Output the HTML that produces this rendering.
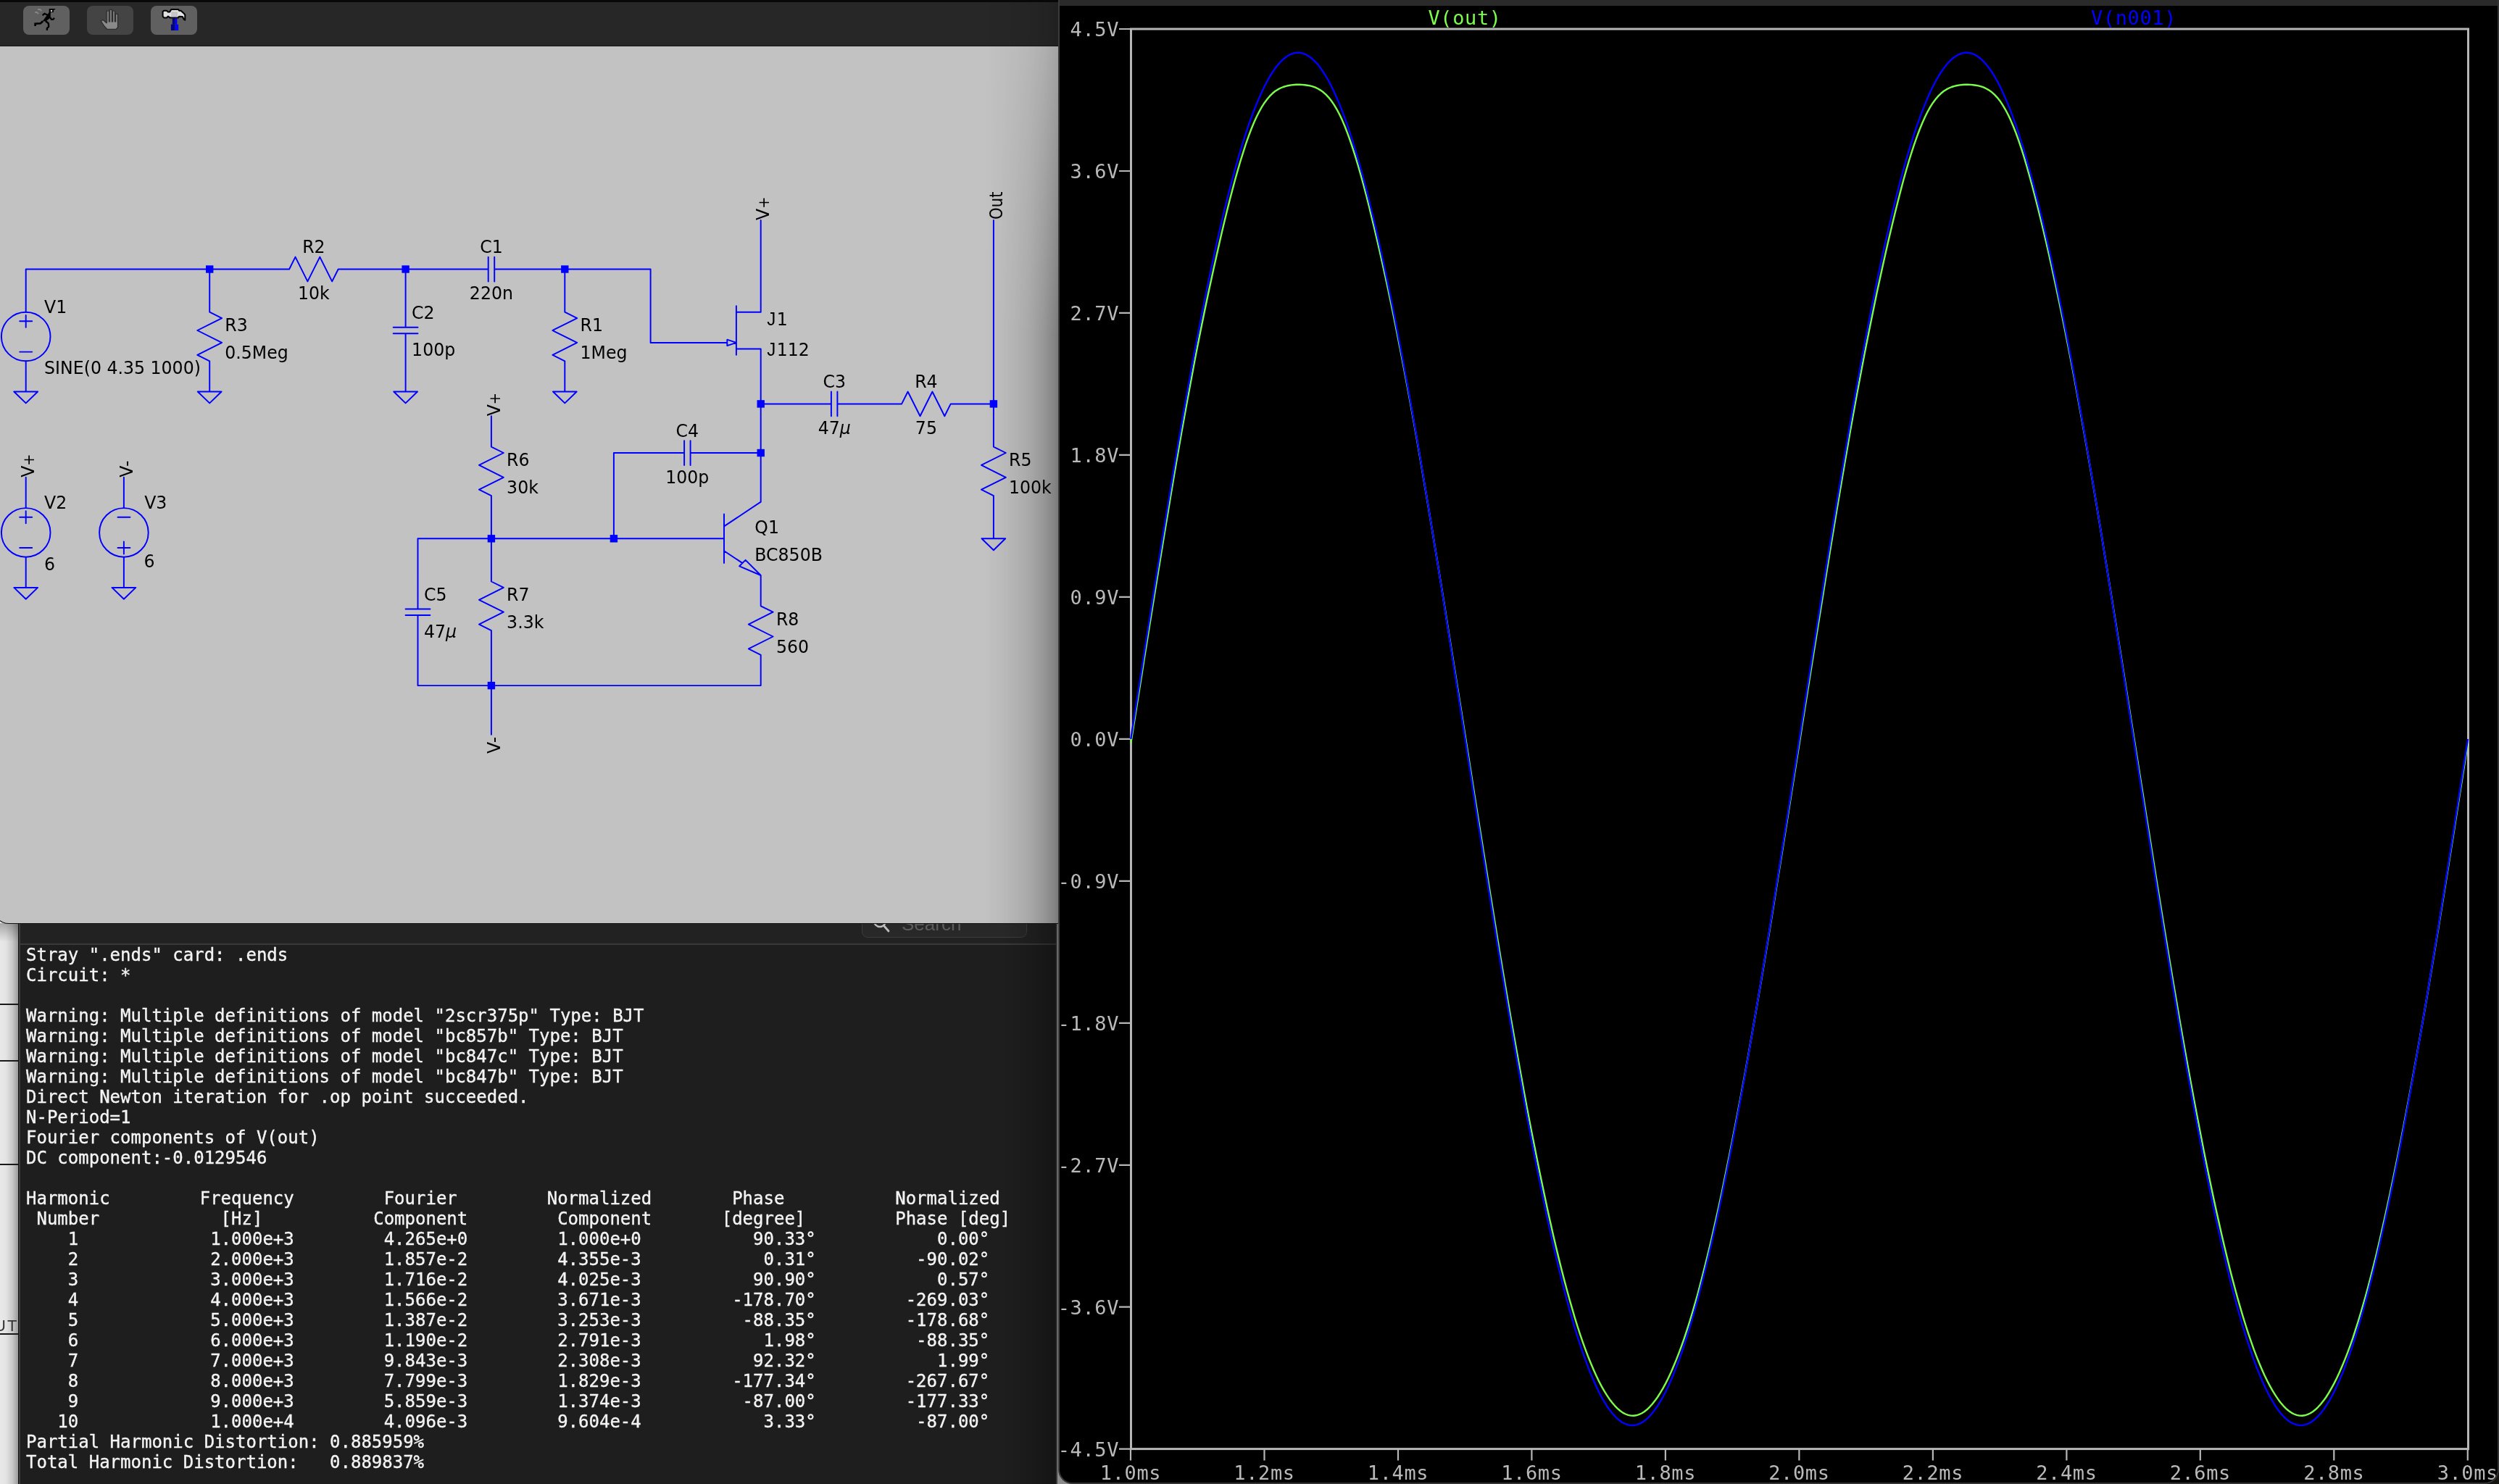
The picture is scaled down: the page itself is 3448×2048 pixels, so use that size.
<!DOCTYPE html>
<html><head><meta charset="utf-8"><title>LTspice</title>
<style>
html,body{margin:0;padding:0;width:3448px;height:2048px;background:#8c8c8c;}
#root{width:3448px;height:2048px;position:relative;overflow:hidden;background:#8c8c8c;}
#left{position:absolute;left:0;top:1260px;width:26px;height:788px;background:linear-gradient(90deg,#e9e9e9 0,#e4e4e4 8px,#c9c9c9 17px,#9c9c9c 25px);overflow:hidden;}
#left i{position:absolute;left:0;width:26px;height:2px;background:#1a1a1a;}
#left b{position:absolute;left:-8px;top:557px;font:normal 22px "Liberation Sans","DejaVu Sans",sans-serif;color:#333;letter-spacing:2px;will-change:transform;}
#left u{position:absolute;left:0;top:14px;width:26px;height:26px;background:linear-gradient(180deg,rgba(0,0,0,0.28),rgba(0,0,0,0));}
#con{position:absolute;left:25px;top:1262px;width:1434px;height:786px;background:#1e1e1e;box-sizing:border-box;border-left:1px solid #111;border-right:2px solid #3a3a3a;}
#con .rs{position:absolute;right:0;top:0;width:70px;height:100%;background:linear-gradient(90deg,rgba(0,0,0,0),rgba(0,0,0,0.12) 50%,rgba(0,0,0,0.3));}
#con .lb{position:absolute;left:0;top:0;width:2px;height:100%;background:#3e3e3e;}
#con .tb{position:absolute;left:2px;right:0;top:0;height:40px;background:#222222;border-bottom:2px solid #3a3a3a;}
#con .sr{will-change:transform;position:absolute;left:1161px;top:-6px;width:228px;height:38px;border:1.5px solid #3c3c3c;border-radius:8px;background:#282828;box-sizing:border-box;}
#con .sr span{position:absolute;left:54px;top:3px;font:26px "Liberation Sans","DejaVu Sans",sans-serif;color:#5c5c5c;}
#con .tx{position:absolute;left:10px;top:41.7px;will-change:transform;font:24px/28px "DejaVu Sans Mono","Liberation Mono",monospace;color:#f4f4f4;-webkit-text-stroke:0.35px #f4f4f4;}
.ln{height:28px;white-space:pre;}
.ln span{display:inline-block;}
.c0{width:239.7px}.c1{width:239.5px}.c2{width:239.5px}.c3{width:241px}.c4{width:239.5px}
#sch{position:absolute;left:-8px;top:0;width:1467.5px;height:1274px;background:#c2c2c2;border-radius:0 0 0 20px;overflow:hidden;box-shadow:0 0 0 1px #111;}
#sch .in{position:absolute;left:8px;top:0;width:1460px;height:1274px;}
#sch .top{position:absolute;left:0;top:0;width:1460px;height:3px;background:#080808;}
#sch .bar{position:absolute;left:0;top:3px;width:1460px;height:60px;background:#272727;border-bottom:1px solid #161616;}
#sch .sh{position:absolute;left:1360px;top:3px;width:100px;height:1271px;background:linear-gradient(90deg,rgba(0,0,0,0) 0,rgba(0,0,0,0.03) 20px,rgba(0,0,0,0.075) 40px,rgba(0,0,0,0.13) 60px,rgba(0,0,0,0.22) 80px,rgba(0,0,0,0.32) 95px,rgba(0,0,0,0.37) 100px);-webkit-mask-image:linear-gradient(180deg,rgba(0,0,0,0.4) 40px,#000 460px);mask-image:linear-gradient(180deg,rgba(0,0,0,0.4) 40px,#000 460px);}
#plt{position:absolute;left:1460px;top:0;width:1988px;height:2048px;background:#000;border-radius:0 0 20px 20px;overflow:hidden;box-sizing:border-box;border-left:2px solid #3a3a3a;border-right:2px solid #333;border-bottom:2px solid #333;}
#plt .tt{position:absolute;left:0;top:0;width:100%;height:8px;background:#2a2a2a;}
#plt .in{position:absolute;left:-2px;top:0;}
</style></head><body><div id="root">
<div style="position:absolute;left:3418px;top:2018px;width:30px;height:30px;background:#16150f"></div>
<div id="left"><i style="top:125px"></i><i style="top:203px"></i><i style="top:346px"></i><i style="top:580px"></i><b>UT</b><u></u></div>
<div id="con"><div class="lb"></div><div class="tb"><div class="sr"><svg width="40" height="40" viewBox="0 0 40 40" style="position:absolute;left:10px;top:2px"><circle cx="14" cy="12" r="8" fill="none" stroke="#bdbdbd" stroke-width="2.4"/><path d="M19.5 18.5L26 26" stroke="#bdbdbd" stroke-width="2.8" stroke-linecap="round"/></svg><span>Search</span></div></div>
<div class="tx">
<div class="ln">Stray &quot;.ends&quot; card: .ends</div>
<div class="ln">Circuit: *</div>
<div class="ln">&nbsp;</div>
<div class="ln">Warning: Multiple definitions of model &quot;2scr375p&quot; Type: BJT</div>
<div class="ln">Warning: Multiple definitions of model &quot;bc857b&quot; Type: BJT</div>
<div class="ln">Warning: Multiple definitions of model &quot;bc847c&quot; Type: BJT</div>
<div class="ln">Warning: Multiple definitions of model &quot;bc847b&quot; Type: BJT</div>
<div class="ln">Direct Newton iteration for .op point succeeded.</div>
<div class="ln">N-Period=1</div>
<div class="ln">Fourier components of V(out)</div>
<div class="ln">DC component:-0.0129546</div>
<div class="ln">&nbsp;</div>
<div class="ln"><span class="c0">Harmonic</span><span class="c1">Frequency</span><span class="c2"> Fourier </span><span class="c3">Normalized</span><span class="c4"> Phase  </span><span class="c5">Normalized</span></div>
<div class="ln"><span class="c0"> Number </span><span class="c1">  [Hz]   </span><span class="c2">Component</span><span class="c3"> Component</span><span class="c4">[degree]</span><span class="c5">Phase [deg]</span></div>
<div class="ln"><span class="c0">    1   </span><span class="c1"> 1.000e+3</span><span class="c2"> 4.265e+0</span><span class="c3"> 1.000e+0</span><span class="c4">   90.33°</span><span class="c5">    0.00°</span></div>
<div class="ln"><span class="c0">    2   </span><span class="c1"> 2.000e+3</span><span class="c2"> 1.857e-2</span><span class="c3"> 4.355e-3</span><span class="c4">    0.31°</span><span class="c5">  -90.02°</span></div>
<div class="ln"><span class="c0">    3   </span><span class="c1"> 3.000e+3</span><span class="c2"> 1.716e-2</span><span class="c3"> 4.025e-3</span><span class="c4">   90.90°</span><span class="c5">    0.57°</span></div>
<div class="ln"><span class="c0">    4   </span><span class="c1"> 4.000e+3</span><span class="c2"> 1.566e-2</span><span class="c3"> 3.671e-3</span><span class="c4"> -178.70°</span><span class="c5"> -269.03°</span></div>
<div class="ln"><span class="c0">    5   </span><span class="c1"> 5.000e+3</span><span class="c2"> 1.387e-2</span><span class="c3"> 3.253e-3</span><span class="c4">  -88.35°</span><span class="c5"> -178.68°</span></div>
<div class="ln"><span class="c0">    6   </span><span class="c1"> 6.000e+3</span><span class="c2"> 1.190e-2</span><span class="c3"> 2.791e-3</span><span class="c4">    1.98°</span><span class="c5">  -88.35°</span></div>
<div class="ln"><span class="c0">    7   </span><span class="c1"> 7.000e+3</span><span class="c2"> 9.843e-3</span><span class="c3"> 2.308e-3</span><span class="c4">   92.32°</span><span class="c5">    1.99°</span></div>
<div class="ln"><span class="c0">    8   </span><span class="c1"> 8.000e+3</span><span class="c2"> 7.799e-3</span><span class="c3"> 1.829e-3</span><span class="c4"> -177.34°</span><span class="c5"> -267.67°</span></div>
<div class="ln"><span class="c0">    9   </span><span class="c1"> 9.000e+3</span><span class="c2"> 5.859e-3</span><span class="c3"> 1.374e-3</span><span class="c4">  -87.00°</span><span class="c5"> -177.33°</span></div>
<div class="ln"><span class="c0">   10   </span><span class="c1"> 1.000e+4</span><span class="c2"> 4.096e-3</span><span class="c3"> 9.604e-4</span><span class="c4">    3.33°</span><span class="c5">  -87.00°</span></div>
<div class="ln">Partial Harmonic Distortion: 0.885959%</div>
<div class="ln">Total Harmonic Distortion:   0.889837%</div>
</div><div class="rs"></div></div>
<div id="sch"><div class="in"><div class="top"></div><div class="bar"></div>
<svg width="300" height="64" viewBox="0 0 300 64" style="position:absolute;left:0;top:0">
<rect x="32" y="8" width="64" height="40" rx="8" fill="#606060"/>
<rect x="120" y="8" width="64" height="40" rx="8" fill="#444444"/>
<rect x="208" y="8" width="64" height="40" rx="8" fill="#606060"/>
<polygon points="67.7,12.0 76.6,12.0 75.0,13.8 73.9,13.8 73.9,16.9 69.9,16.9 69.6,24.4 63.4,29.3 58.6,29.6 65.0,20.7 67.7,16.9" fill="#000"/>
<polyline points="59.1,29.3 55.9,32.3 48.6,32.7 48.6,36.0" fill="none" stroke="#000" stroke-width="2.6"/>
<polyline points="62.9,29.0 66.9,32.3 67.2,36.8 64.9,39.0 64.9,42.0" fill="none" stroke="#000" stroke-width="2.4"/>
<polyline points="65.6,20.7 61.5,18.8 58.6,21.2" fill="none" stroke="#000" stroke-width="2.2"/>
<polyline points="69.3,24.2 71.0,26.9 73.4,26.6 75.0,24.7" fill="none" stroke="#000" stroke-width="2.2"/>
<rect x="69.9" y="13.9" width="2.2" height="2.2" fill="#d0d0d0"/>
<polyline points="52.1,13.0 55.3,13.0 57.2,15.1" fill="none" stroke="#868686" stroke-width="1.8"/>
<polyline points="48.3,17.0 51.0,17.0 53.2,19.2" fill="none" stroke="#868686" stroke-width="1.8"/>
<polygon points="147.9,15.8 149.8,15.8 149.8,30.4 151.9,30.4 151.9,13.9 153.8,13.9 153.8,30.4 156.0,30.4 156.0,15.8 157.9,15.8 157.9,30.4 160.0,30.4 160.0,19.9 161.9,19.9 161.9,37.6 159.8,39.8 148.2,39.8 143.9,35.0 140.1,29.3 142.0,28.2 146.6,32.3 147.9,32.3" fill="#8a8a8a" stroke="#2e2e2e" stroke-width="2.6" stroke-linejoin="round"/>
<polygon points="147.9,15.8 149.8,15.8 149.8,30.4 151.9,30.4 151.9,13.9 153.8,13.9 153.8,30.4 156.0,30.4 156.0,15.8 157.9,15.8 157.9,30.4 160.0,30.4 160.0,19.9 161.9,19.9 161.9,37.6 159.8,39.8 148.2,39.8 143.9,35.0 140.1,29.3 142.0,28.2 146.6,32.3 147.9,32.3" fill="#8a8a8a"/>
<rect x="147.9" y="15.8" width="1.9" height="14.6" fill="#787878"/>
<rect x="151.9" y="13.9" width="1.9" height="16.4" fill="#787878"/>
<rect x="156.0" y="15.8" width="1.9" height="14.6" fill="#787878"/>
<rect x="160.0" y="19.9" width="1.9" height="10.5" fill="#787878"/>
<polygon points="224.6,16.1 226.2,14.7 230.0,14.7 231.9,16.6 234.0,16.6 236.4,12.9 245.9,12.9 247.2,14.7 249.6,14.7 253.7,18.5 255.3,20.4 255.3,27.7 253.7,26.6 251.8,23.1 247.0,22.8 245.9,24.4 234.6,24.4 231.9,22.6 230.0,24.4 226.2,24.4 224.6,22.6" fill="#e2e2e2" stroke="#000" stroke-width="2" stroke-linejoin="round"/>
<rect x="236.2" y="16.1" width="8.9" height="7.0" fill="#c6c6c6"/>
<rect x="237.8" y="25.3" width="3.8" height="8.4" fill="#000080"/>
<rect x="241.6" y="25.3" width="2.7" height="8.4" fill="#0000f0"/>
<rect x="235.9" y="33.6" width="5.7" height="8.4" fill="#000080"/>
<rect x="241.6" y="33.6" width="4.6" height="8.4" fill="#0000f8"/>
</svg>
<svg class="sch" width="1460" height="1211" viewBox="0 63 1460 1211" style="position:absolute;left:0;top:63px;will-change:transform">
<g fill="none" stroke="#0000ff" stroke-width="1.95" stroke-linecap="round" stroke-linejoin="round">
<path d="M27.2 443.3L44.2 443.3M27.2 485.6L44.2 485.6M35.7 434.9L35.7 451.8M35.7 506.7L35.7 498.3M35.7 422.2L35.7 430.7M559.6 460.2L559.6 489.8M559.6 451.8L559.6 422.2M542.7 451.8L576.5 451.8M542.7 460.2L576.5 460.2M673.7 371.5L644.1 371.5M682.2 371.5L711.7 371.5M682.2 354.6L682.2 388.4M673.7 354.6L673.7 388.4M1015.9 422.2L1015.9 489.8M999.0 472.9L1003.3 472.9M1146.9 557.4L1117.4 557.4M1155.4 557.4L1185.0 557.4M1155.4 540.5L1155.4 574.3M1146.9 540.5L1146.9 574.3M944.1 625.0L914.5 625.0M952.6 625.0L982.1 625.0M952.6 608.1L952.6 641.9M944.1 608.1L944.1 641.9M999.0 709.5L999.0 777.1M982.1 743.3L999.0 743.3M999.0 726.4L1049.7 692.6M999.0 760.2L1024.4 777.1M576.5 848.9L576.5 878.5M576.5 840.5L576.5 810.9M559.6 840.5L593.4 840.5M559.6 848.9L593.4 848.9M27.2 713.7L44.2 713.7M27.2 756.0L44.2 756.0M35.7 705.3L35.7 722.2M35.7 777.1L35.7 768.7M35.7 692.6L35.7 701.1M179.4 756.0L162.5 756.0M179.4 713.7L162.5 713.7M170.9 764.4L170.9 747.5M170.9 692.6L170.9 701.1M170.9 777.1L170.9 768.7M35.7 422.2L35.7 371.5L390.6 371.5M35.7 506.7L35.7 540.5M289.2 371.5L289.2 422.2M289.2 506.7L289.2 540.5M475.1 371.5L644.1 371.5M559.6 371.5L559.6 422.2M559.6 489.8L559.6 540.5M711.7 371.5L897.6 371.5L897.6 472.9L999.0 472.9M779.3 371.5L779.3 422.2M779.3 506.7L779.3 540.5M1049.7 405.3L1049.7 303.9M1049.7 506.7L1049.7 692.6M1049.7 557.4L1117.4 557.4M1185.0 557.4L1235.7 557.4M1320.2 557.4L1370.9 557.4M1370.9 303.9L1370.9 608.1M1370.9 692.6L1370.9 743.3M1049.7 625.0L982.1 625.0M914.5 625.0L846.9 625.0L846.9 743.3M576.5 810.9L576.5 743.3L982.1 743.3M677.9 574.3L677.9 608.1M677.9 692.6L677.9 794.0M677.9 878.5L677.9 1013.7M576.5 878.5L576.5 946.1L1049.7 946.1L1049.7 912.3M1049.7 827.8L1049.7 794.0M35.7 658.8L35.7 692.6M35.7 777.1L35.7 810.9M170.9 658.8L170.9 692.6M170.9 777.1L170.9 810.9M289.2 422.2L289.2 430.7L306.1 439.1L272.3 456.0L306.1 472.9L272.3 489.8L289.2 498.3L289.2 506.7M475.1 371.5L466.7 371.5L458.2 388.4L441.3 354.6L424.4 388.4L407.5 354.6L399.1 371.5L390.6 371.5M779.3 422.2L779.3 430.7L796.2 439.1L762.4 456.0L796.2 472.9L762.4 489.8L779.3 498.3L779.3 506.7M1049.7 405.3L1049.7 430.7L1015.9 430.7M1015.9 481.4L1049.7 481.4L1049.7 506.7M1320.2 557.4L1311.7 557.4L1303.3 574.3L1286.4 540.5L1269.5 574.3L1252.6 540.5L1244.1 557.4L1235.7 557.4M1370.9 608.1L1370.9 616.6L1387.8 625.0L1354.0 641.9L1387.8 658.8L1354.0 675.7L1370.9 684.2L1370.9 692.6M677.9 608.1L677.9 616.6L694.8 625.0L661.0 641.9L694.8 658.8L661.0 675.7L677.9 684.2L677.9 692.6M677.9 794.0L677.9 802.5L694.8 810.9L661.0 827.8L694.8 844.7L661.0 861.6L677.9 870.1L677.9 878.5M1049.7 827.8L1049.7 836.3L1066.6 844.7L1032.8 861.6L1066.6 878.5L1032.8 895.4L1049.7 903.9L1049.7 912.3M19.3 540.5L52.1 540.5L35.7 556.4ZM272.8 540.5L305.6 540.5L289.2 556.4ZM543.3 540.5L576.0 540.5L559.6 556.4ZM763.0 540.5L795.7 540.5L779.3 556.4ZM1354.5 743.3L1387.2 743.3L1370.9 759.2ZM19.3 810.9L52.1 810.9L35.7 826.8ZM154.5 810.9L187.3 810.9L170.9 826.8ZM1015.9 472.9L1003.3 468.7L1003.3 477.1ZM1049.7 794.0L1020.2 781.3L1028.6 772.9Z"/>
<circle cx="35.7" cy="464.5" r="33.8"/>
<circle cx="35.7" cy="734.9" r="33.8"/>
<circle cx="170.9" cy="734.9" r="33.8"/>
</g>
<g fill="#0000ff">
<rect x="284.0" y="366.3" width="10.4" height="10.4"/>
<rect x="554.4" y="366.3" width="10.4" height="10.4"/>
<rect x="774.1" y="366.3" width="10.4" height="10.4"/>
<rect x="1044.5" y="552.2" width="10.4" height="10.4"/>
<rect x="1044.5" y="619.8" width="10.4" height="10.4"/>
<rect x="1365.7" y="552.2" width="10.4" height="10.4"/>
<rect x="672.7" y="738.1" width="10.4" height="10.4"/>
<rect x="841.7" y="738.1" width="10.4" height="10.4"/>
<rect x="672.7" y="940.9" width="10.4" height="10.4"/>
</g>
<g fill="#000" font-family="'DejaVu Sans','Liberation Sans',sans-serif" font-size="24.6px">
<text transform="translate(61.1,431.9) scale(0.961,1)">V1</text>
<text transform="translate(61.1,516.4) scale(0.961,1)">SINE(0 4.35 1000)</text>
<text transform="translate(310.3,457.2) scale(0.961,1)">R3</text>
<text transform="translate(310.3,495.2) scale(0.961,1)">0.5Meg</text>
<text transform="translate(800.5,457.2) scale(0.961,1)">R1</text>
<text transform="translate(800.5,495.2) scale(0.961,1)">1Meg</text>
<text transform="translate(568.1,440.3) scale(0.961,1)">C2</text>
<text transform="translate(568.1,491.0) scale(0.961,1)">100p</text>
<text transform="translate(1058.2,448.8) scale(0.961,1)"><tspan font-family="Liberation Sans" font-size="25">J</tspan><tspan dx="1.5">1</tspan></text>
<text transform="translate(1058.2,491.0) scale(0.961,1)"><tspan font-family="Liberation Sans" font-size="25">J</tspan><tspan dx="1.5">112</tspan></text>
<text transform="translate(1041.3,736.1) scale(0.961,1)">Q1</text>
<text transform="translate(1041.3,774.1) scale(0.961,1)">BC850B</text>
<text transform="translate(1392.0,643.1) scale(0.961,1)">R5</text>
<text transform="translate(1392.0,681.1) scale(0.961,1)">100k</text>
<text transform="translate(699.1,643.1) scale(0.961,1)">R6</text>
<text transform="translate(699.1,681.1) scale(0.961,1)">30k</text>
<text transform="translate(699.1,829.0) scale(0.961,1)">R7</text>
<text transform="translate(699.1,867.0) scale(0.961,1)">3.3k</text>
<text transform="translate(1070.9,862.8) scale(0.961,1)">R8</text>
<text transform="translate(1070.9,900.8) scale(0.961,1)">560</text>
<text transform="translate(585.0,829.0) scale(0.961,1)">C5</text>
<text transform="translate(585.0,879.7) scale(0.961,1)">47<tspan font-style="italic">µ</tspan></text>
<text transform="translate(61.1,702.3) scale(0.961,1)">V2</text>
<text transform="translate(61.1,786.8) scale(0.961,1)">6</text>
<text transform="translate(199.2,702.2) scale(0.961,1)">V3</text>
<text transform="translate(198.5,782.6) scale(0.961,1)">6</text>
<text transform="translate(432.9,349.0) scale(0.961,1)" text-anchor="middle">R2</text>
<text transform="translate(432.9,413.4) scale(0.961,1)" text-anchor="middle">10k</text>
<text transform="translate(677.9,349.0) scale(0.961,1)" text-anchor="middle">C1</text>
<text transform="translate(677.9,413.4) scale(0.961,1)" text-anchor="middle">220n</text>
<text transform="translate(1151.2,534.9) scale(0.961,1)" text-anchor="middle">C3</text>
<text transform="translate(1151.2,599.3) scale(0.961,1)" text-anchor="middle">47<tspan font-style="italic">µ</tspan></text>
<text transform="translate(1277.9,534.9) scale(0.961,1)" text-anchor="middle">R4</text>
<text transform="translate(1277.9,599.3) scale(0.961,1)" text-anchor="middle">75</text>
<text transform="translate(948.3,602.5) scale(0.961,1)" text-anchor="middle">C4</text>
<text transform="translate(948.3,666.9) scale(0.961,1)" text-anchor="middle">100p</text>
<text transform="translate(1061.3,303.9) rotate(-90) scale(0.961,1)">V<tspan font-size="20.4">+</tspan></text>
<text transform="translate(1382.5,302.9) rotate(-90) scale(0.86,1)">Out</text>
<text transform="translate(689.5,574.3) rotate(-90) scale(0.961,1)">V<tspan font-size="20.4">+</tspan></text>
<text transform="translate(47.3,658.8) rotate(-90) scale(0.961,1)">V<tspan font-size="20.4">+</tspan></text>
<text transform="translate(182.5,658.8) rotate(-90) scale(0.961,1)">V-</text>
<text transform="translate(689.5,1016.7) rotate(-90) scale(0.961,1)" text-anchor="end">V-</text>
</g>
</svg>
<div class="sh"></div>
</div></div>
<div id="plt"><div class="tt"></div><div class="in">
<svg class="plt" width="1988" height="2048" viewBox="1460 0 1988 2048" style="position:absolute;left:0;top:0;will-change:transform">
<rect x="1560.5" y="40" width="1845" height="1959.6" fill="none" stroke="#b6b6b6" stroke-width="3"/>
<path d="M1544 40.0H1560M1544 236.0H1560M1544 431.9H1560M1544 627.9H1560M1544 823.9H1560M1544 1019.9H1560M1544 1215.8H1560M1544 1411.8H1560M1544 1607.8H1560M1544 1803.7H1560M1544 1999.7H1560M1560.0 2000V2015.6M1744.5 2000V2015.6M1929.0 2000V2015.6M2113.4 2000V2015.6M2297.9 2000V2015.6M2482.4 2000V2015.6M2666.9 2000V2015.6M2851.4 2000V2015.6M3035.8 2000V2015.6M3220.3 2000V2015.6M3404.8 2000V2015.6" stroke="#b6b6b6" stroke-width="2.2" fill="none"/>
<g fill="#b9b9b9" font-family="'DejaVu Sans Mono','Liberation Mono',monospace" font-size="27px" letter-spacing="0.6">
<text x="1544" y="49.8" text-anchor="end">4.5V</text>
<text x="1544" y="245.8" text-anchor="end">3.6V</text>
<text x="1544" y="441.7" text-anchor="end">2.7V</text>
<text x="1544" y="637.7" text-anchor="end">1.8V</text>
<text x="1544" y="833.7" text-anchor="end">0.9V</text>
<text x="1544" y="1029.7" text-anchor="end">0.0V</text>
<text x="1544" y="1225.6" text-anchor="end">-0.9V</text>
<text x="1544" y="1421.6" text-anchor="end">-1.8V</text>
<text x="1544" y="1617.6" text-anchor="end">-2.7V</text>
<text x="1544" y="1813.5" text-anchor="end">-3.6V</text>
<text x="1544" y="2009.5" text-anchor="end">-4.5V</text>
<text x="1560.0" y="2042" text-anchor="middle">1.0ms</text>
<text x="1744.5" y="2042" text-anchor="middle">1.2ms</text>
<text x="1929.0" y="2042" text-anchor="middle">1.4ms</text>
<text x="2113.4" y="2042" text-anchor="middle">1.6ms</text>
<text x="2297.9" y="2042" text-anchor="middle">1.8ms</text>
<text x="2482.4" y="2042" text-anchor="middle">2.0ms</text>
<text x="2666.9" y="2042" text-anchor="middle">2.2ms</text>
<text x="2851.4" y="2042" text-anchor="middle">2.4ms</text>
<text x="3035.8" y="2042" text-anchor="middle">2.6ms</text>
<text x="3220.3" y="2042" text-anchor="middle">2.8ms</text>
<text x="3404.8" y="2042" text-anchor="middle">3.0ms</text>
</g>
<g font-family="'DejaVu Sans Mono','Liberation Mono',monospace" font-size="27px" letter-spacing="0.6">
<text x="1970.5" y="34" fill="#7cfc4c">V(out)</text>
<text x="2885" y="34" fill="#0000ff">V(n001)</text>
</g>
<path d="M1560.3 1025.6L1564.0 1002.3L1567.7 979.0L1571.4 955.7L1575.1 932.5L1578.7 909.3L1582.4 886.2L1586.1 863.1L1589.8 840.1L1593.5 817.1L1597.2 794.3L1600.9 771.5L1604.6 748.9L1608.3 726.4L1612.0 704.1L1615.6 682.0L1619.3 660.1L1623.0 638.4L1626.7 617.0L1630.4 595.9L1634.1 575.2L1637.8 554.8L1641.5 534.7L1645.2 515.0L1648.8 495.6L1652.5 476.6L1656.2 457.9L1659.9 439.7L1663.6 421.7L1667.3 404.1L1671.0 386.9L1674.7 369.9L1678.4 353.4L1682.1 337.1L1685.7 321.2L1689.4 305.7L1693.1 290.5L1696.8 275.8L1700.5 261.6L1704.2 247.8L1707.9 234.6L1711.6 222.0L1715.3 210.1L1718.9 198.8L1722.6 188.3L1726.3 178.5L1730.0 169.5L1733.7 161.3L1737.4 154.0L1741.1 147.4L1744.8 141.7L1748.5 136.7L1752.1 132.4L1755.8 128.8L1759.5 125.8L1763.2 123.4L1766.9 121.5L1770.6 120.0L1774.3 118.8L1778.0 118.0L1781.7 117.4L1785.4 117.0L1789.0 116.8L1792.7 116.8L1796.4 116.9L1800.1 117.2L1803.8 117.7L1807.5 118.4L1811.2 119.4L1814.9 120.7L1818.6 122.5L1822.2 124.6L1825.9 127.3L1829.6 130.6L1833.3 134.6L1837.0 139.2L1840.7 144.6L1844.4 150.8L1848.1 157.8L1851.8 165.6L1855.5 174.2L1859.1 183.6L1862.8 193.8L1866.5 204.8L1870.2 216.4L1873.9 228.7L1877.6 241.7L1881.3 255.2L1885.0 269.2L1888.7 283.7L1892.3 298.6L1896.0 314.0L1899.7 329.7L1903.4 345.8L1907.1 362.2L1910.8 379.0L1914.5 396.1L1918.2 413.6L1921.9 431.3L1925.6 449.5L1929.2 468.0L1932.9 486.8L1936.6 506.0L1940.3 525.5L1944.0 545.5L1947.7 565.7L1951.4 586.4L1955.1 607.3L1958.8 628.5L1962.4 650.1L1966.1 671.9L1969.8 693.9L1973.5 716.1L1977.2 738.5L1980.9 761.1L1984.6 783.8L1988.3 806.6L1992.0 829.5L1995.6 852.5L1999.3 875.6L2003.0 898.7L2006.7 921.9L2010.4 945.1L2014.1 968.3L2017.8 991.6L2021.5 1014.9L2025.2 1038.2L2028.9 1061.6L2032.5 1085.0L2036.2 1108.3L2039.9 1131.6L2043.6 1154.9L2047.3 1178.2L2051.0 1201.3L2054.7 1224.4L2058.4 1247.3L2062.1 1270.1L2065.7 1292.7L2069.4 1315.2L2073.1 1337.4L2076.8 1359.4L2080.5 1381.1L2084.2 1402.6L2087.9 1423.8L2091.6 1444.8L2095.3 1465.4L2099.0 1485.8L2102.6 1505.8L2106.3 1525.6L2110.0 1545.1L2113.7 1564.2L2117.4 1583.0L2121.1 1601.5L2124.8 1619.7L2128.5 1637.5L2132.2 1654.9L2135.8 1672.0L2139.5 1688.6L2143.2 1704.9L2146.9 1720.7L2150.6 1736.1L2154.3 1751.0L2158.0 1765.4L2161.7 1779.3L2165.4 1792.8L2169.1 1805.7L2172.7 1818.1L2176.4 1830.0L2180.1 1841.3L2183.8 1852.1L2187.5 1862.4L2191.2 1872.1L2194.9 1881.3L2198.6 1890.0L2202.3 1898.2L2205.9 1905.8L2209.6 1912.9L2213.3 1919.4L2217.0 1925.4L2220.7 1930.9L2224.4 1935.7L2228.1 1940.1L2231.8 1943.8L2235.5 1947.0L2239.1 1949.6L2242.8 1951.5L2246.5 1952.9L2250.2 1953.6L2253.9 1953.8L2257.6 1953.3L2261.3 1952.2L2265.0 1950.5L2268.7 1948.2L2272.4 1945.3L2276.0 1941.8L2279.7 1937.8L2283.4 1933.1L2287.1 1928.0L2290.8 1922.2L2294.5 1915.9L2298.2 1909.1L2301.9 1901.7L2305.6 1893.8L2309.2 1885.3L2312.9 1876.4L2316.6 1866.9L2320.3 1856.8L2324.0 1846.3L2327.7 1835.2L2331.4 1823.6L2335.1 1811.4L2338.8 1798.7L2342.5 1785.5L2346.1 1771.8L2349.8 1757.6L2353.5 1742.9L2357.2 1727.8L2360.9 1712.2L2364.6 1696.1L2368.3 1679.6L2372.0 1662.7L2375.7 1645.5L2379.3 1627.8L2383.0 1609.8L2386.7 1591.5L2390.4 1572.8L2394.1 1553.8L2397.8 1534.5L2401.5 1514.9L2405.2 1495.0L2408.9 1474.7L2412.6 1454.2L2416.2 1433.4L2419.9 1412.3L2423.6 1391.0L2427.3 1369.3L2431.0 1347.5L2434.7 1325.3L2438.4 1303.0L2442.1 1280.5L2445.8 1257.8L2449.4 1234.9L2453.1 1211.9L2456.8 1188.8L2460.5 1165.6L2464.2 1142.3L2467.9 1119.0L2471.6 1095.6L2475.3 1072.3L2479.0 1048.9L2482.7 1025.6L2486.3 1002.3L2490.0 979.0L2493.7 955.7L2497.4 932.5L2501.1 909.3L2504.8 886.2L2508.5 863.1L2512.2 840.1L2515.9 817.1L2519.5 794.3L2523.2 771.5L2526.9 748.9L2530.6 726.4L2534.3 704.1L2538.0 682.0L2541.7 660.1L2545.4 638.4L2549.1 617.0L2552.7 595.9L2556.4 575.2L2560.1 554.8L2563.8 534.7L2567.5 515.0L2571.2 495.6L2574.9 476.6L2578.6 457.9L2582.3 439.7L2586.0 421.7L2589.6 404.1L2593.3 386.9L2597.0 369.9L2600.7 353.4L2604.4 337.1L2608.1 321.2L2611.8 305.7L2615.5 290.5L2619.2 275.8L2622.8 261.6L2626.5 247.8L2630.2 234.6L2633.9 222.0L2637.6 210.1L2641.3 198.8L2645.0 188.3L2648.7 178.5L2652.4 169.5L2656.1 161.3L2659.7 154.0L2663.4 147.4L2667.1 141.7L2670.8 136.7L2674.5 132.4L2678.2 128.8L2681.9 125.8L2685.6 123.4L2689.3 121.5L2692.9 120.0L2696.6 118.8L2700.3 118.0L2704.0 117.4L2707.7 117.0L2711.4 116.8L2715.1 116.8L2718.8 116.9L2722.5 117.2L2726.2 117.7L2729.8 118.4L2733.5 119.4L2737.2 120.7L2740.9 122.5L2744.6 124.6L2748.3 127.3L2752.0 130.6L2755.7 134.6L2759.4 139.2L2763.0 144.6L2766.7 150.8L2770.4 157.8L2774.1 165.6L2777.8 174.2L2781.5 183.6L2785.2 193.8L2788.9 204.8L2792.6 216.4L2796.2 228.7L2799.9 241.7L2803.6 255.2L2807.3 269.2L2811.0 283.7L2814.7 298.6L2818.4 314.0L2822.1 329.7L2825.8 345.8L2829.5 362.2L2833.1 379.0L2836.8 396.1L2840.5 413.6L2844.2 431.3L2847.9 449.5L2851.6 468.0L2855.3 486.8L2859.0 506.0L2862.7 525.5L2866.3 545.5L2870.0 565.7L2873.7 586.4L2877.4 607.3L2881.1 628.5L2884.8 650.1L2888.5 671.9L2892.2 693.9L2895.9 716.1L2899.6 738.5L2903.2 761.1L2906.9 783.8L2910.6 806.6L2914.3 829.5L2918.0 852.5L2921.7 875.6L2925.4 898.7L2929.1 921.9L2932.8 945.1L2936.4 968.3L2940.1 991.6L2943.8 1014.9L2947.5 1038.2L2951.2 1061.6L2954.9 1085.0L2958.6 1108.3L2962.3 1131.6L2966.0 1154.9L2969.7 1178.2L2973.3 1201.3L2977.0 1224.4L2980.7 1247.3L2984.4 1270.1L2988.1 1292.7L2991.8 1315.2L2995.5 1337.4L2999.2 1359.4L3002.9 1381.1L3006.5 1402.6L3010.2 1423.8L3013.9 1444.8L3017.6 1465.4L3021.3 1485.8L3025.0 1505.8L3028.7 1525.6L3032.4 1545.1L3036.1 1564.2L3039.7 1583.0L3043.4 1601.5L3047.1 1619.7L3050.8 1637.5L3054.5 1654.9L3058.2 1672.0L3061.9 1688.6L3065.6 1704.9L3069.3 1720.7L3073.0 1736.1L3076.6 1751.0L3080.3 1765.4L3084.0 1779.3L3087.7 1792.8L3091.4 1805.7L3095.1 1818.1L3098.8 1830.0L3102.5 1841.3L3106.2 1852.1L3109.8 1862.4L3113.5 1872.1L3117.2 1881.3L3120.9 1890.0L3124.6 1898.2L3128.3 1905.8L3132.0 1912.9L3135.7 1919.4L3139.4 1925.4L3143.1 1930.9L3146.7 1935.7L3150.4 1940.1L3154.1 1943.8L3157.8 1947.0L3161.5 1949.6L3165.2 1951.5L3168.9 1952.9L3172.6 1953.6L3176.3 1953.8L3179.9 1953.3L3183.6 1952.2L3187.3 1950.5L3191.0 1948.2L3194.7 1945.3L3198.4 1941.8L3202.1 1937.8L3205.8 1933.1L3209.5 1928.0L3213.2 1922.2L3216.8 1915.9L3220.5 1909.1L3224.2 1901.7L3227.9 1893.8L3231.6 1885.3L3235.3 1876.4L3239.0 1866.9L3242.7 1856.8L3246.4 1846.3L3250.0 1835.2L3253.7 1823.6L3257.4 1811.4L3261.1 1798.7L3264.8 1785.5L3268.5 1771.8L3272.2 1757.6L3275.9 1742.9L3279.6 1727.8L3283.2 1712.2L3286.9 1696.1L3290.6 1679.6L3294.3 1662.7L3298.0 1645.5L3301.7 1627.8L3305.4 1609.8L3309.1 1591.5L3312.8 1572.8L3316.5 1553.8L3320.1 1534.5L3323.8 1514.9L3327.5 1495.0L3331.2 1474.7L3334.9 1454.2L3338.6 1433.4L3342.3 1412.3L3346.0 1391.0L3349.7 1369.3L3353.3 1347.5L3357.0 1325.3L3360.7 1303.0L3364.4 1280.5L3368.1 1257.8L3371.8 1234.9L3375.5 1211.9L3379.2 1188.8L3382.9 1165.6L3386.6 1142.3L3390.2 1119.0L3393.9 1095.6L3397.6 1072.3L3401.3 1048.9L3405.0 1025.6" fill="none" stroke="#7cfc4c" stroke-width="2.4" stroke-linejoin="round"/>
<path d="M1560.3 1019.9L1564.0 996.0L1567.7 972.3L1571.4 948.5L1575.1 924.8L1578.7 901.1L1582.4 877.6L1586.1 854.1L1589.8 830.7L1593.5 807.4L1597.2 784.3L1600.9 761.3L1604.6 738.5L1608.3 715.9L1612.0 693.4L1615.6 671.2L1619.3 649.1L1623.0 627.4L1626.7 605.8L1630.4 584.5L1634.1 563.5L1637.8 542.8L1641.5 522.4L1645.2 502.3L1648.8 482.5L1652.5 463.1L1656.2 444.0L1659.9 425.3L1663.6 407.0L1667.3 389.0L1671.0 371.5L1674.7 354.3L1678.4 337.6L1682.1 321.3L1685.7 305.4L1689.4 290.0L1693.1 275.1L1696.8 260.6L1700.5 246.6L1704.2 233.1L1707.9 220.1L1711.6 207.6L1715.3 195.6L1718.9 184.2L1722.6 173.2L1726.3 162.8L1730.0 152.9L1733.7 143.6L1737.4 134.9L1741.1 126.7L1744.8 119.0L1748.5 111.9L1752.1 105.5L1755.8 99.5L1759.5 94.2L1763.2 89.4L1766.9 85.3L1770.6 81.7L1774.3 78.7L1778.0 76.3L1781.7 74.5L1785.4 73.3L1789.0 72.7L1792.7 72.7L1796.4 73.3L1800.1 74.5L1803.8 76.3L1807.5 78.7L1811.2 81.7L1814.9 85.3L1818.6 89.4L1822.2 94.2L1825.9 99.5L1829.6 105.5L1833.3 111.9L1837.0 119.0L1840.7 126.7L1844.4 134.9L1848.1 143.6L1851.8 152.9L1855.5 162.8L1859.1 173.2L1862.8 184.2L1866.5 195.6L1870.2 207.6L1873.9 220.1L1877.6 233.1L1881.3 246.6L1885.0 260.6L1888.7 275.1L1892.3 290.0L1896.0 305.4L1899.7 321.3L1903.4 337.6L1907.1 354.3L1910.8 371.5L1914.5 389.0L1918.2 407.0L1921.9 425.3L1925.6 444.0L1929.2 463.1L1932.9 482.5L1936.6 502.3L1940.3 522.4L1944.0 542.8L1947.7 563.5L1951.4 584.5L1955.1 605.8L1958.8 627.4L1962.4 649.1L1966.1 671.2L1969.8 693.4L1973.5 715.9L1977.2 738.5L1980.9 761.3L1984.6 784.3L1988.3 807.4L1992.0 830.7L1995.6 854.1L1999.3 877.6L2003.0 901.1L2006.7 924.8L2010.4 948.5L2014.1 972.3L2017.8 996.0L2021.5 1019.8L2025.2 1043.7L2028.9 1067.4L2032.5 1091.2L2036.2 1114.9L2039.9 1138.6L2043.6 1162.1L2047.3 1185.6L2051.0 1209.0L2054.7 1232.3L2058.4 1255.4L2062.1 1278.4L2065.7 1301.2L2069.4 1323.8L2073.1 1346.3L2076.8 1368.5L2080.5 1390.6L2084.2 1412.3L2087.9 1433.9L2091.6 1455.2L2095.3 1476.2L2099.0 1496.9L2102.6 1517.3L2106.3 1537.4L2110.0 1557.2L2113.7 1576.6L2117.4 1595.7L2121.1 1614.4L2124.8 1632.7L2128.5 1650.7L2132.2 1668.2L2135.8 1685.4L2139.5 1702.1L2143.2 1718.4L2146.9 1734.3L2150.6 1749.7L2154.3 1764.6L2158.0 1779.1L2161.7 1793.1L2165.4 1806.6L2169.1 1819.6L2172.7 1832.1L2176.4 1844.1L2180.1 1855.5L2183.8 1866.5L2187.5 1876.9L2191.2 1886.8L2194.9 1896.1L2198.6 1904.8L2202.3 1913.0L2205.9 1920.7L2209.6 1927.8L2213.3 1934.2L2217.0 1940.2L2220.7 1945.5L2224.4 1950.3L2228.1 1954.4L2231.8 1958.0L2235.5 1961.0L2239.1 1963.4L2242.8 1965.2L2246.5 1966.4L2250.2 1967.0L2253.9 1967.0L2257.6 1966.4L2261.3 1965.2L2265.0 1963.4L2268.7 1961.0L2272.4 1958.0L2276.0 1954.4L2279.7 1950.3L2283.4 1945.5L2287.1 1940.2L2290.8 1934.2L2294.5 1927.8L2298.2 1920.7L2301.9 1913.0L2305.6 1904.8L2309.2 1896.1L2312.9 1886.8L2316.6 1876.9L2320.3 1866.5L2324.0 1855.5L2327.7 1844.1L2331.4 1832.1L2335.1 1819.6L2338.8 1806.6L2342.5 1793.1L2346.1 1779.1L2349.8 1764.6L2353.5 1749.7L2357.2 1734.3L2360.9 1718.4L2364.6 1702.1L2368.3 1685.4L2372.0 1668.2L2375.7 1650.7L2379.3 1632.7L2383.0 1614.4L2386.7 1595.7L2390.4 1576.6L2394.1 1557.2L2397.8 1537.4L2401.5 1517.3L2405.2 1496.9L2408.9 1476.2L2412.6 1455.2L2416.2 1433.9L2419.9 1412.3L2423.6 1390.6L2427.3 1368.5L2431.0 1346.3L2434.7 1323.8L2438.4 1301.2L2442.1 1278.4L2445.8 1255.4L2449.4 1232.3L2453.1 1209.0L2456.8 1185.6L2460.5 1162.1L2464.2 1138.6L2467.9 1114.9L2471.6 1091.2L2475.3 1067.4L2479.0 1043.7L2482.7 1019.9L2486.3 996.0L2490.0 972.3L2493.7 948.5L2497.4 924.8L2501.1 901.1L2504.8 877.6L2508.5 854.1L2512.2 830.7L2515.9 807.4L2519.5 784.3L2523.2 761.3L2526.9 738.5L2530.6 715.9L2534.3 693.4L2538.0 671.2L2541.7 649.1L2545.4 627.4L2549.1 605.8L2552.7 584.5L2556.4 563.5L2560.1 542.8L2563.8 522.4L2567.5 502.3L2571.2 482.5L2574.9 463.1L2578.6 444.0L2582.3 425.3L2586.0 407.0L2589.6 389.0L2593.3 371.5L2597.0 354.3L2600.7 337.6L2604.4 321.3L2608.1 305.4L2611.8 290.0L2615.5 275.1L2619.2 260.6L2622.8 246.6L2626.5 233.1L2630.2 220.1L2633.9 207.6L2637.6 195.6L2641.3 184.2L2645.0 173.2L2648.7 162.8L2652.4 152.9L2656.1 143.6L2659.7 134.9L2663.4 126.7L2667.1 119.0L2670.8 111.9L2674.5 105.5L2678.2 99.5L2681.9 94.2L2685.6 89.4L2689.3 85.3L2692.9 81.7L2696.6 78.7L2700.3 76.3L2704.0 74.5L2707.7 73.3L2711.4 72.7L2715.1 72.7L2718.8 73.3L2722.5 74.5L2726.2 76.3L2729.8 78.7L2733.5 81.7L2737.2 85.3L2740.9 89.4L2744.6 94.2L2748.3 99.5L2752.0 105.5L2755.7 111.9L2759.4 119.0L2763.0 126.7L2766.7 134.9L2770.4 143.6L2774.1 152.9L2777.8 162.8L2781.5 173.2L2785.2 184.2L2788.9 195.6L2792.6 207.6L2796.2 220.1L2799.9 233.1L2803.6 246.6L2807.3 260.6L2811.0 275.1L2814.7 290.0L2818.4 305.4L2822.1 321.3L2825.8 337.6L2829.5 354.3L2833.1 371.5L2836.8 389.0L2840.5 407.0L2844.2 425.3L2847.9 444.0L2851.6 463.1L2855.3 482.5L2859.0 502.3L2862.7 522.4L2866.3 542.8L2870.0 563.5L2873.7 584.5L2877.4 605.8L2881.1 627.4L2884.8 649.1L2888.5 671.2L2892.2 693.4L2895.9 715.9L2899.6 738.5L2903.2 761.3L2906.9 784.3L2910.6 807.4L2914.3 830.7L2918.0 854.1L2921.7 877.6L2925.4 901.1L2929.1 924.8L2932.8 948.5L2936.4 972.3L2940.1 996.0L2943.8 1019.8L2947.5 1043.7L2951.2 1067.4L2954.9 1091.2L2958.6 1114.9L2962.3 1138.6L2966.0 1162.1L2969.7 1185.6L2973.3 1209.0L2977.0 1232.3L2980.7 1255.4L2984.4 1278.4L2988.1 1301.2L2991.8 1323.8L2995.5 1346.3L2999.2 1368.5L3002.9 1390.6L3006.5 1412.3L3010.2 1433.9L3013.9 1455.2L3017.6 1476.2L3021.3 1496.9L3025.0 1517.3L3028.7 1537.4L3032.4 1557.2L3036.1 1576.6L3039.7 1595.7L3043.4 1614.4L3047.1 1632.7L3050.8 1650.7L3054.5 1668.2L3058.2 1685.4L3061.9 1702.1L3065.6 1718.4L3069.3 1734.3L3073.0 1749.7L3076.6 1764.6L3080.3 1779.1L3084.0 1793.1L3087.7 1806.6L3091.4 1819.6L3095.1 1832.1L3098.8 1844.1L3102.5 1855.5L3106.2 1866.5L3109.8 1876.9L3113.5 1886.8L3117.2 1896.1L3120.9 1904.8L3124.6 1913.0L3128.3 1920.7L3132.0 1927.8L3135.7 1934.2L3139.4 1940.2L3143.1 1945.5L3146.7 1950.3L3150.4 1954.4L3154.1 1958.0L3157.8 1961.0L3161.5 1963.4L3165.2 1965.2L3168.9 1966.4L3172.6 1967.0L3176.3 1967.0L3179.9 1966.4L3183.6 1965.2L3187.3 1963.4L3191.0 1961.0L3194.7 1958.0L3198.4 1954.4L3202.1 1950.3L3205.8 1945.5L3209.5 1940.2L3213.2 1934.2L3216.8 1927.8L3220.5 1920.7L3224.2 1913.0L3227.9 1904.8L3231.6 1896.1L3235.3 1886.8L3239.0 1876.9L3242.7 1866.5L3246.4 1855.5L3250.0 1844.1L3253.7 1832.1L3257.4 1819.6L3261.1 1806.6L3264.8 1793.1L3268.5 1779.1L3272.2 1764.6L3275.9 1749.7L3279.6 1734.3L3283.2 1718.4L3286.9 1702.1L3290.6 1685.4L3294.3 1668.2L3298.0 1650.7L3301.7 1632.7L3305.4 1614.4L3309.1 1595.7L3312.8 1576.6L3316.5 1557.2L3320.1 1537.4L3323.8 1517.3L3327.5 1496.9L3331.2 1476.2L3334.9 1455.2L3338.6 1433.9L3342.3 1412.3L3346.0 1390.6L3349.7 1368.5L3353.3 1346.3L3357.0 1323.8L3360.7 1301.2L3364.4 1278.4L3368.1 1255.4L3371.8 1232.3L3375.5 1209.0L3379.2 1185.6L3382.9 1162.1L3386.6 1138.6L3390.2 1114.9L3393.9 1091.2L3397.6 1067.4L3401.3 1043.7L3405.0 1019.9" fill="none" stroke="#0000ff" stroke-width="2.4" stroke-linejoin="round"/>
</svg>
</div></div>
</div></body></html>
